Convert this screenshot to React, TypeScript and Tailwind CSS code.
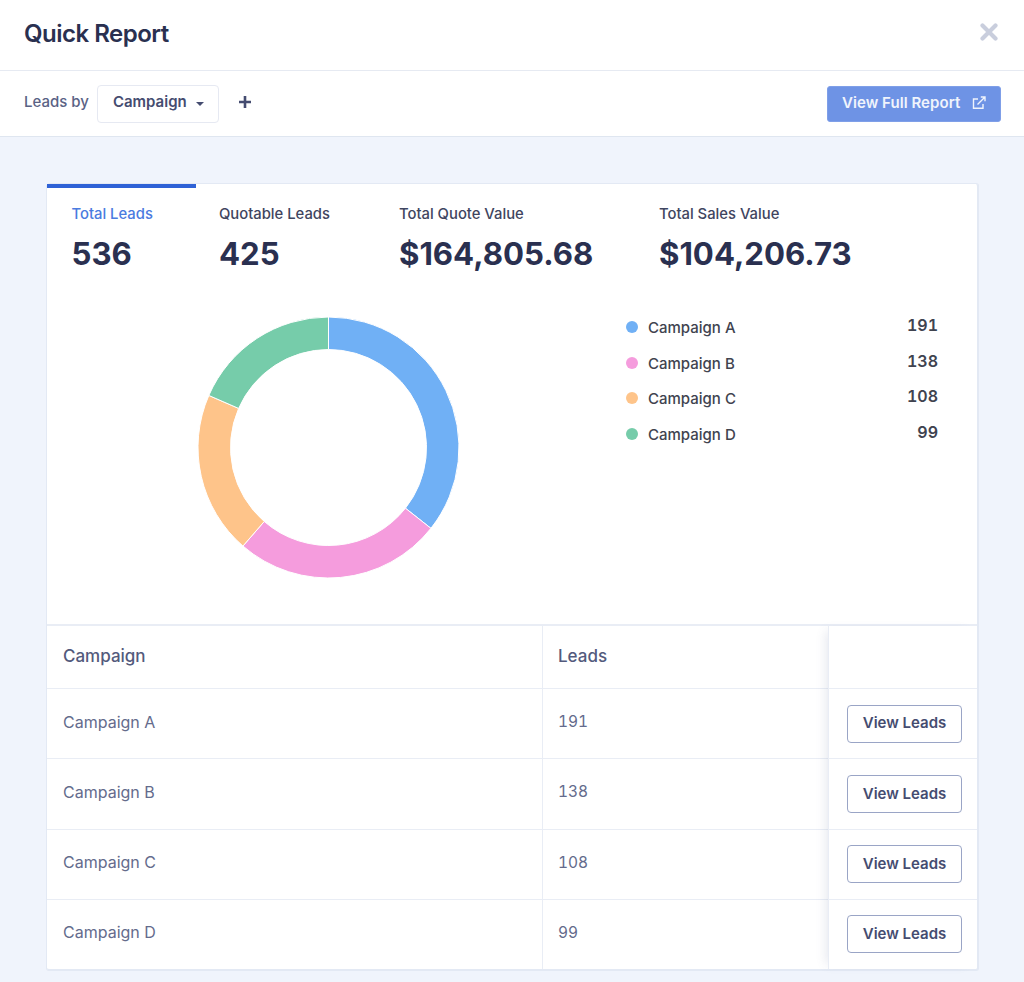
import React from "react";

const data = [
  { name: "Campaign A", value: 191, color: "#70b0f5" },
  { name: "Campaign B", value: 138, color: "#f59cdd" },
  { name: "Campaign C", value: 108, color: "#fec48a" },
  { name: "Campaign D", value: 99, color: "#76ccaa" },
];

function Donut() {
  const total = data.reduce((s, d) => s + d.value, 0);
  const cx = 131, cy = 131, R = 130.5, r = 98;
  let acc = 0;
  const pt = (rad: number, a: number) => `${cx + rad * Math.sin(a)} ${cy - rad * Math.cos(a)}`;
  return (
    <svg width="263" height="263" viewBox="-0.5 -0.5 263 263" className="block">
      {data.map((d) => {
        const a0 = (acc / total) * Math.PI * 2;
        acc += d.value;
        const a1 = (acc / total) * Math.PI * 2;
        const large = a1 - a0 > Math.PI ? 1 : 0;
        return (
          <path
            key={d.name}
            d={`M ${pt(R, a0)} A ${R} ${R} 0 ${large} 1 ${pt(R, a1)} L ${pt(r, a1)} A ${r} ${r} 0 ${large} 0 ${pt(r, a0)} Z`}
            fill={d.color}
            stroke="#ffffff"
            strokeWidth="1"
          />
        );
      })}
    </svg>
  );
}

function Stat({ label, value, width }: { label: string; value: string; width: string }) {
  return (
    <div className={`${width} shrink-0 h-[112px] pt-[17px] border-t-4 border-transparent`}>
      <div className="text-[14.8px] leading-[18px] font-medium text-[#3f4560]">{label}</div>
      <div className="mt-[12px] text-[31.2px] leading-[38px] font-bold text-[#2a3050]">{value}</div>
    </div>
  );
}

export default function App() {
  return (
    <div className="h-[982px] w-[1024px] overflow-hidden bg-[#f0f4fc] font-['Inter',sans-serif]">
      <div className="h-[71px] bg-white border-b border-[#e6eaf2] flex items-center justify-between pl-[24px] pr-[26px]">
        <h1 className="text-[24px] leading-[30px] font-semibold text-[#2a3050] tracking-[-0.5px] -mt-[2px]">Quick Report</h1>
        <svg width="18" height="18" viewBox="0 0 18 18" className="-mt-[6px]">
          <path d="M2.5 2.5L15.5 15.5M15.5 2.5L2.5 15.5" stroke="#c9cedd" strokeWidth="4.2" strokeLinecap="round" />
        </svg>
      </div>
      <div className="h-[66px] bg-white border-b border-[#dfe6f0] flex items-center pl-[24px] pr-[23px]">
        <span className="text-[15px] font-medium text-[#5a6285] -mt-[3px]">Leads by</span>
        <div className="ml-[8px] w-[122px] h-[38px] border border-[#e6e9f2] rounded-[4px] flex items-center pl-[15px]">
          <span className="text-[15px] font-semibold text-[#454c70] -mt-[2px]">Campaign</span>
          <svg width="8" height="4" viewBox="0 0 8 4" className="ml-[9px]"><path d="M0 0H8L4 4Z" fill="#454c70" /></svg>
        </div>
        <svg width="14" height="14" viewBox="0 0 14 14" className="ml-[19px] -mt-[3px]">
          <path d="M7 1V13M1 7H13" stroke="#454c70" strokeWidth="2.6" />
        </svg>
        <button className="ml-auto w-[174px] h-[36px] rounded-[3px] bg-[#6e93e5] border border-[#7f9fe8] flex items-center pl-[14px] text-white">
          <span className="text-[15px] font-semibold text-[#f0f4fc] tracking-[0.05px] -mt-[1px]">View Full Report</span>
          <svg width="14" height="14" viewBox="0 0 14 14" fill="none" stroke="#f0f4fc" strokeWidth="1.4" className="ml-[12px] -mt-[2px]">
            <path d="M11 8V12.2H1.5V3H6" />
            <path d="M5.5 8.5L13 1M8.8 1H13V5.2" />
          </svg>
        </button>
      </div>
      <div className="ml-[47px] mt-[47px] w-[932px] h-[787px] bg-white rounded-[3px] border-r-2 border-b-2 border-[#e3e9f4] shadow-[-1px_0_0_#e3e9f4,0_-1px_0_#e3e9f4] flex flex-col">
        <div className="flex">
          <div className="pl-[24.5px] w-[149px] shrink-0 border-t-4 border-[#2f62d6] h-[112px]">
            <div className="pt-[17px] text-[14.8px] leading-[18px] font-medium text-[#4a7be0]">Total Leads</div>
            <div className="mt-[12px] text-[31.2px] leading-[38px] font-bold text-[#2a3050]">536</div>
          </div>
          <div className="w-[23px]" />
          <Stat label="Quotable Leads" value="425" width="w-[180px]" />
          <Stat label="Total Quote Value" value="$164,805.68" width="w-[260px]" />
          <Stat label="Total Sales Value" value="$104,206.73" width="w-[300px]" />
        </div>
        <div className="h-[330px] flex border-b-2 border-[#e9edf5]">
          <div className="w-[579px] pl-[150px] pt-[20px]"><Donut /></div>
          <div className="pt-[20px] w-[312px]">
            {data.map((d) => (
              <div key={d.name} className="h-[35.5px] flex items-start">
                <span className="mt-[5px] w-[12px] h-[12px] rounded-full" style={{ backgroundColor: d.color }} />
                <span className="ml-[10px] mt-[1px] text-[15px] leading-[22px] font-medium text-[#40434f]">{d.name}</span>
                <span className="ml-auto -mt-[2px] text-[16px] leading-[22px] font-semibold text-[#40434f] tabular-nums">{d.value}</span>
              </div>
            ))}
          </div>
        </div>
        <div className="relative flex-1 flex flex-col text-[16px] text-[#646b8c]">
          <div className="h-[63px] flex border-b border-[#e9edf5] font-medium text-[17px] text-[#535a7c]">
            <div className="w-[496px] pl-[16px] border-r border-[#e9edf5] flex items-center">Campaign</div>
            <div className="w-[285px] pl-[15px] flex items-center">Leads</div>
          </div>
          {data.map((d, i) => (
            <div key={d.name} className={`${i < 3 ? "h-[70.25px] border-b border-[#e9edf5]" : "flex-1"} flex`}>
              <div className="w-[496px] pl-[16px] pb-[4px] border-r border-[#e9edf5] flex items-center">{d.name}</div>
              <div className="w-[285px] pl-[15px] pb-[4px] flex items-center tabular-nums text-[15.5px]">{d.value}</div>
              <div className="flex-1 flex items-center pl-[19px]">
                <button className="relative z-10 w-[115px] h-[38px] rounded-[4px] border border-[#9aa5c6] text-[15px] font-semibold text-[#454c70]">View Leads</button>
              </div>
            </div>
          ))}
          <div className="absolute top-0 bottom-0 right-0 w-[149px] border-l border-[#e9edf5] shadow-[-7px_0_10px_-5px_rgba(80,90,140,0.14)] pointer-events-none" />
        </div>
      </div>
    </div>
  );
}
